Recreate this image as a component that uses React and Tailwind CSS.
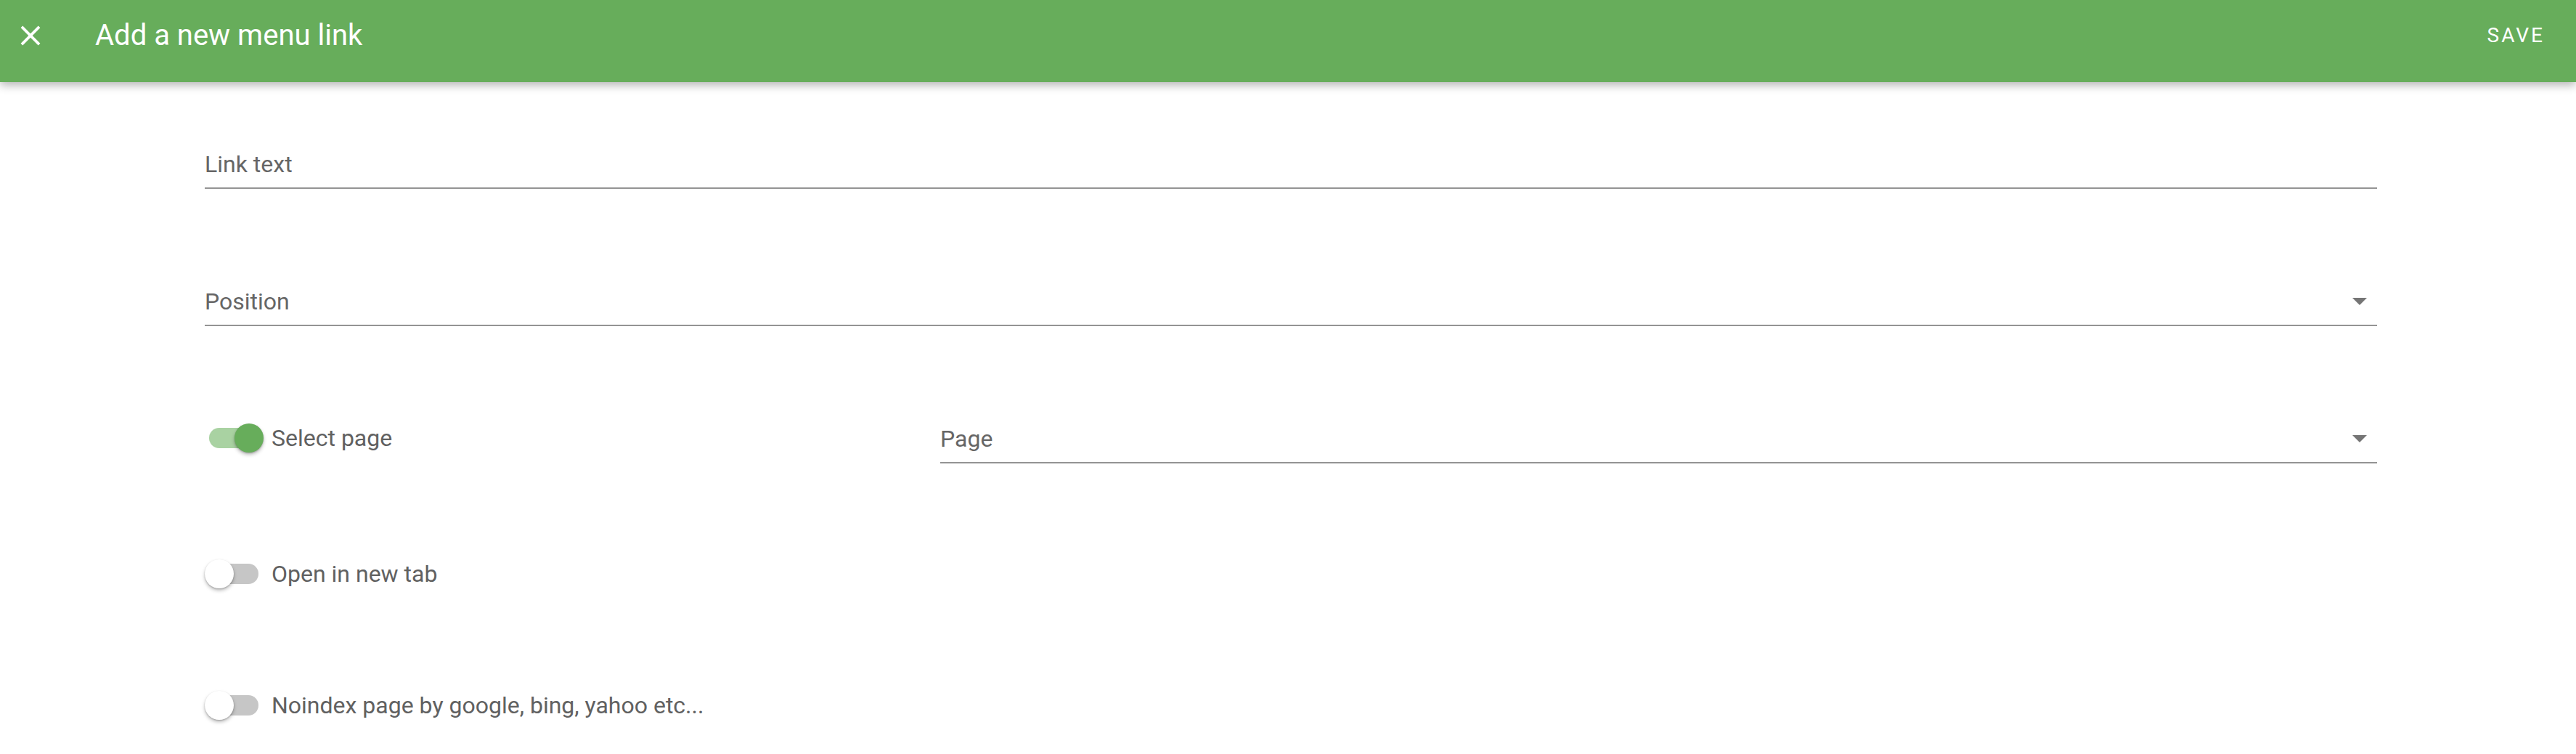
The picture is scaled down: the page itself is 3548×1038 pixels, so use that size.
import React, { useState } from 'react';

const font = { fontFamily: 'Roboto, "Liberation Sans", sans-serif' };

function Toggle({ on, onChange }) {
  return (
    <button type="button" onClick={() => onChange(!on)} className="relative w-[82px] h-[40px] shrink-0">
      <span className={`absolute left-[6px] top-[6px] w-[68px] h-[28px] rounded-full ${on ? 'bg-[#a9d2a2]' : 'bg-[#c6c6c6]'}`} />
      <span
        className={`absolute top-0 w-[40px] h-[40px] rounded-full shadow-[0_3px_5px_rgba(0,0,0,0.25),0_1px_2px_rgba(0,0,0,0.2)] ${on ? 'left-[41px] bg-[#67ad5b]' : 'left-0 bg-white'}`}
      />
    </button>
  );
}

function Caret() {
  return (
    <svg width="20" height="10" viewBox="0 0 10 5" className="shrink-0">
      <path d="M0 0l5 5 5-5z" fill="#757575" />
    </svg>
  );
}

export default function App() {
  const [selectPage, setSelectPage] = useState(true);
  const [newTab, setNewTab] = useState(false);
  const [noindex, setNoindex] = useState(false);

  return (
    <div className="min-h-screen bg-white" style={font}>
      <header className="h-[113px] bg-[#67ad5b] flex items-center pb-[16px] pl-[19px] pr-[43px] shadow-[0_4px_12px_rgba(0,0,0,0.3)] relative z-10">
        <button type="button" className="w-[46px] h-[46px] flex items-center justify-center">
          <svg width="46" height="46" viewBox="0 0 24 24">
            <path d="M19 6.41L17.59 5 12 10.59 6.41 5 5 6.41 10.59 12 5 17.59 6.41 19 12 13.41 17.59 19 19 17.59 13.41 12z" fill="#fff" />
          </svg>
        </button>
        <h1 className="ml-[66px] text-[40px] text-white font-normal leading-none">Add a new menu link</h1>
        <button type="button" className="ml-auto text-[28px] text-white font-normal tracking-[3px] leading-none">SAVE</button>
      </header>

      <main className="pl-[282px] pr-[274px] pt-[81px] pb-[40px] flex flex-col">
        <div className="h-[66px] flex items-center border-b-2 border-[#949494]">
          <span className="text-[32px] text-[#666] leading-none">Link text</span>
        </div>

        <div className="mt-[123px] h-[66px] flex items-center border-b-2 border-[#949494] pr-[14px]">
          <span className="text-[32px] text-[#666] leading-none">Position</span>
          <span className="ml-auto"><Caret /></span>
        </div>

        <div className="mt-[123px] flex items-center">
          <div className="w-[1013px] flex items-center pb-[4px]">
            <Toggle on={selectPage} onChange={setSelectPage} />
            <span className="ml-[10px] text-[32px] text-[#616161] leading-none">Select page</span>
          </div>
          <div className="flex-1 h-[66px] flex items-center border-b-2 border-[#949494] pr-[14px]">
            <span className="text-[32px] text-[#666] leading-none">Page</span>
            <span className="ml-auto"><Caret /></span>
          </div>
        </div>

        <div className="mt-[119px] h-[66px] flex items-center">
          <Toggle on={newTab} onChange={setNewTab} />
          <span className="ml-[10px] text-[32px] text-[#616161] leading-none">Open in new tab</span>
        </div>

        <div className="mt-[115px] h-[66px] flex items-center">
          <Toggle on={noindex} onChange={setNoindex} />
          <span className="ml-[10px] text-[32px] text-[#616161] leading-none">Noindex page by google, bing, yahoo etc...</span>
        </div>
      </main>
    </div>
  );
}
